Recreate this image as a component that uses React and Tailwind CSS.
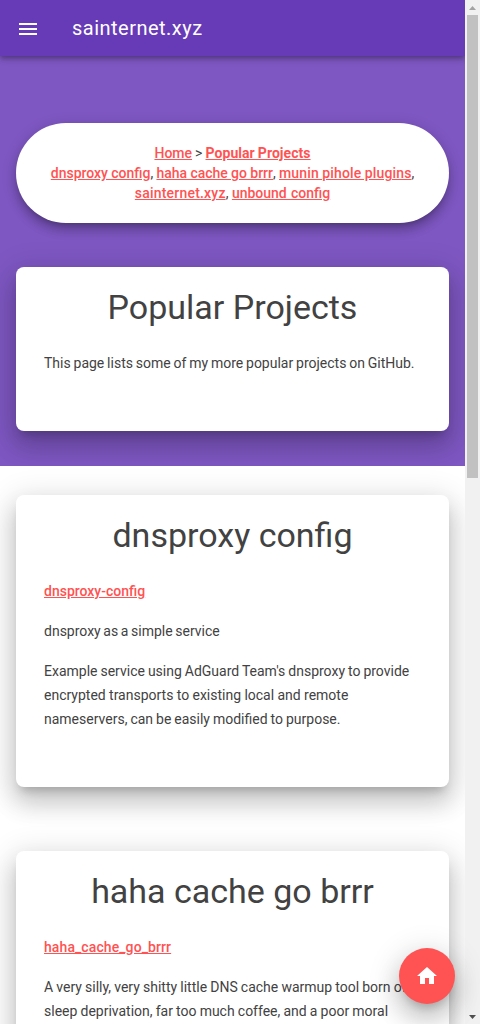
function Link({ children, className = "font-medium" }) {
  return (
    <a href="#" className={`underline text-[#ff5252] ${className}`}>
      {children}
    </a>
  );
}

function Card({ title, className, children }) {
  return (
    <section
      className={`mx-4 shrink-0 rounded-lg bg-white px-7 pt-4 shadow-[0_8px_10px_-5px_rgba(0,0,0,0.2),0_16px_24px_2px_rgba(0,0,0,0.14),0_6px_30px_5px_rgba(0,0,0,0.12)] ${className}`}
    >
      <h2 className="mb-5 text-center text-[34px] leading-12 whitespace-nowrap">
        {title}
      </h2>
      <div className="flex flex-col gap-4 text-sm leading-6 whitespace-nowrap">
        {children}
      </div>
    </section>
  );
}

function Header() {
  return (
    <header className="relative z-10 flex h-14 shrink-0 items-center bg-[#673ab7] text-white shadow-[0_2px_4px_-1px_rgba(0,0,0,0.2),0_4px_5px_0_rgba(0,0,0,0.14),0_1px_10px_0_rgba(0,0,0,0.12)]">
      <button aria-label="Menu" className="ml-4 mt-0.5">
        <svg viewBox="0 0 24 24" className="size-6 fill-white">
          <path d="M3 18h18v-2H3v2zm0-5h18v-2H3v2zm0-7v2h18V6H3z" />
        </svg>
      </button>
      <h1 className="ml-8 text-xl tracking-[0.48px]">sainternet.xyz</h1>
    </header>
  );
}

function Scrollbar() {
  return (
    <aside className="flex w-[15px] shrink-0 flex-col items-center bg-[#f1f1f1]">
      <svg viewBox="0 0 15 15" className="h-[15px] w-[15px] shrink-0 fill-[#a3a3a3]">
        <path d="M4 10h7L7.5 6z" />
      </svg>
      <div className="h-[463px] w-[11px] bg-[#c1c1c1]" />
      <svg viewBox="0 0 15 15" className="mt-auto h-[15px] w-[15px] shrink-0 fill-[#505050]">
        <path d="M4 6h7l-3.5 4z" />
      </svg>
    </aside>
  );
}

export default function App() {
  return (
    <div className="relative flex h-[1024px] w-[480px] overflow-hidden bg-white font-[Roboto,sans-serif] text-[#424242]">
      <div className="flex w-[465px] flex-col overflow-hidden">
        <Header />
        <main className="flex flex-col">
          <div className="flex h-[410px] shrink-0 flex-col overflow-hidden bg-[#7e57c2] pt-[67px]">
            <nav className="mx-4 h-[100px] shrink-0 rounded-full bg-white pt-5 text-center text-sm leading-5 whitespace-nowrap shadow-[0_5px_5px_-3px_rgba(0,0,0,0.2),0_8px_10px_1px_rgba(0,0,0,0.14),0_3px_14px_2px_rgba(0,0,0,0.12)]">
              <span className="[word-spacing:-0.4px]">
                <Link>Home</Link> &gt;{" "}
                <Link className="font-bold tracking-[0.05px]">Popular Projects</Link>
              </span>
              <br />
              <span className="[word-spacing:-0.2px]">
                <Link>dnsproxy config</Link>, <Link>haha cache go brrr</Link>,{" "}
                <Link className="font-medium tracking-[0.14px]">munin pihole plugins</Link>,
              </span>
              <br />
              <Link className="font-medium tracking-[0.2px]">sainternet.xyz</Link>,{" "}
              <Link className="font-medium [word-spacing:0.8px]">unbound config</Link>
            </nav>
            <Card title="Popular Projects" className="mt-11 h-[164px]">
              <p className="[word-spacing:-0.65px]">
                This page lists some of my more popular projects on GitHub.
              </p>
            </Card>
          </div>
          <div className="flex h-[558px] flex-col gap-16 overflow-hidden pt-[29px]">
            <Card title="dnsproxy config" className="h-[292px]">
              <p>
                <Link>dnsproxy-config</Link>
              </p>
              <p className="[word-spacing:-0.85px]">dnsproxy as a simple service</p>
              <p className="[word-spacing:-0.5px]">
                Example service using AdGuard Team's dnsproxy to provide
                <br />
                <span className="[word-spacing:-0.15px]">
                  encrypted transports to existing local and remote
                </span>
                <br />
                nameservers, can be easily modified to purpose.
              </p>
            </Card>
            <Card title="haha cache go brrr" className="h-[292px]">
              <p>
                <Link className="font-medium tracking-[0.09px]">haha_cache_go_brrr</Link>
              </p>
              <p className="[word-spacing:-0.33px]">
                A very silly, very shitty little DNS cache warmup tool born of
                <br />
                sleep deprivation, far too much coffee, and a poor moral
              </p>
            </Card>
          </div>
        </main>
      </div>
      <Scrollbar />
      <button
        aria-label="Home"
        className="absolute right-[25px] bottom-5 flex size-14 items-center justify-center rounded-full bg-[#ff5252] shadow-[0_8px_10px_-5px_rgba(0,0,0,0.2),0_16px_24px_2px_rgba(0,0,0,0.14),0_6px_30px_5px_rgba(0,0,0,0.12)]"
      >
        <svg viewBox="0 0 24 24" className="size-6 fill-white">
          <path d="M10 20v-6h4v6h5v-8h3L12 3 2 12h3v8z" />
        </svg>
      </button>
    </div>
  );
}
